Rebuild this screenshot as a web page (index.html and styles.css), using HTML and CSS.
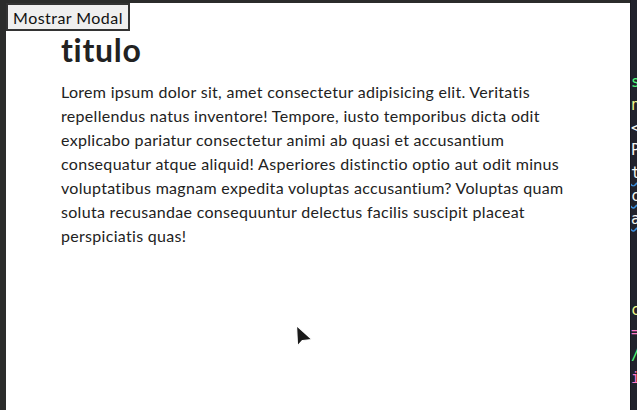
FILE: index.html
```html
<!DOCTYPE html>
<html lang="es">
<head>
<meta charset="utf-8">
<title>Modal</title>
<link rel="stylesheet" href="styles.css">
</head>
<body>
<div class="screen">
  <div class="left-edge"></div>
  <div class="page">
    <button class="btn">Mostrar Modal</button>
    <div class="modal">
      <h1 class="title">titulo</h1>
      <p class="text">Lorem ipsum dolor sit, amet consectetur adipisicing elit. Veritatis<br>repellendus natus inventore! Tempore, iusto temporibus dicta odit<br>explicabo pariatur consectetur animi ab quasi et accusantium<br>consequatur atque aliquid! Asperiores distinctio optio aut odit minus<br>voluptatibus magnam expedita voluptas accusantium? Voluptas quam<br>soluta recusandae consequuntur delectus facilis suscipit placeat<br>perspiciatis quas!</p>
    </div>
    <svg class="cursor" width="20" height="26" viewBox="0 0 20 26">
      <path d="M1.5 1.5 L2.5 22 L7.5 16.5 L17 15.5 Z" fill="#1a1a1a" stroke="#ffffff" stroke-width="1.2" stroke-linejoin="round"/>
    </svg>
  </div>
  <div class="editor">
    <div class="code"><span class="c-green">s</span></div>
    <div class="code"><span class="c-yellow">n</span></div>
    <div class="code"><span class="c-white">&lt;</span></div>
    <div class="code"><span class="c-white">P</span></div>
    <div class="code"><span class="c-white sq">t</span></div>
    <div class="code"><span class="c-white sq">c</span></div>
    <div class="code"><span class="c-white sq">a</span></div>
    <div class="code">&nbsp;</div>
    <div class="code">&nbsp;</div>
    <div class="code">&nbsp;</div>
    <div class="code"><span class="c-yellow">c</span></div>
    <div class="code"><span class="c-pink">=</span></div>
    <div class="code"><span class="c-green">/</span></div>
    <div class="code"><span class="c-pink">i</span></div>
  </div>
</div>
</body>
</html>
```
FILE: styles.css
```css
html, body {
  margin: 0;
  padding: 0;
  background: #2b2c2b;
}
.screen {
  display: flex;
  width: 637px;
  height: 410px;
  overflow: hidden;
  background: #2b2c2b;
}
.left-edge {
  width: 6px;
  flex: none;
}
.page {
  position: relative;
  flex: 1;
  margin-top: 3px;
  background: #ffffff;
  font-family: Lato, "Open Sans", sans-serif;
  color: #222222;
}
.btn {
  display: block;
  margin: 0;
  width: 124px;
  height: 28px;
  padding: 0 4px;
  border: 2px solid #333333;
  background: #efefef;
  font-family: Lato, "Open Sans", sans-serif;
  font-size: 16px;
  letter-spacing: 0.45px;
  color: #111111;
}
.modal {
  margin-left: 55px;
}
.title {
  margin: 0;
  font-size: 32px;
  line-height: 1.2;
  font-weight: 700;
  letter-spacing: 0.7px;
  color: #222222;
}
.text {
  margin: 11px 0 0;
  font-size: 16px;
  line-height: 24px;
  letter-spacing: 0.3px;
  white-space: nowrap;
}
.cursor {
  position: absolute;
  left: 289px;
  top: 321px;
}
.editor {
  width: 6px;
  flex: none;
  background: #21222c;
  border-left: 1px solid #191a21;
  padding-top: 71px;
  font-family: "DejaVu Sans Mono", monospace;
  font-size: 15px;
  line-height: 22.75px;
  overflow: hidden;
  white-space: nowrap;
}
.code {
  height: 22.75px;
}
.c-green { color: #50fa7b; }
.c-yellow { color: #f1fa8c; }
.c-white { color: #f8f8f2; }
.c-pink { color: #ff79c6; }
.sq {
  text-decoration: underline wavy #3a8fe0;
  text-underline-offset: 3px;
}
```
